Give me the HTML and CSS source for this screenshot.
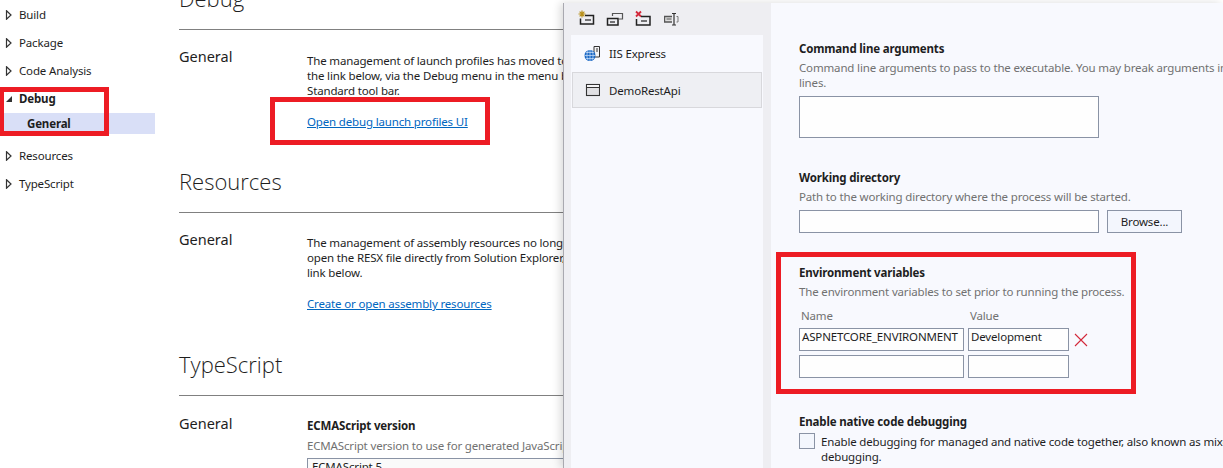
FILE: index.html
```html
<!DOCTYPE html>
<html lang="en">
<head>
    <meta charset="UTF-8">
    <title>Project properties</title>
    <link rel="stylesheet" href="styles.css">
</head>
<body>

<div class="app">
    <!-- project property tree -->
    <nav class="tree">
        <div class="tree-row"><svg class="arrow" width="7" height="10" viewBox="0 0 7 10"><path d="M1.500 .8 6 5 1.500 9.200z" fill="#fff" stroke="#333" stroke-width="1.200"/></svg>Build</div>
        <div class="tree-row"><svg class="arrow" width="7" height="10" viewBox="0 0 7 10"><path d="M1.500 .8 6 5 1.500 9.200z" fill="#fff" stroke="#333" stroke-width="1.200"/></svg>Package</div>
        <div class="tree-row"><svg class="arrow" width="7" height="10" viewBox="0 0 7 10"><path d="M1.500 .8 6 5 1.500 9.200z" fill="#fff" stroke="#333" stroke-width="1.200"/></svg>Code Analysis</div>
        <div class="tree-row tree-open"><svg class="arrow" width="7" height="10" viewBox="0 0 7 10"><path d="M7 2v6H1z" fill="#333"/></svg>Debug</div>
        <div class="tree-child">General</div>
        <div class="tree-row"><svg class="arrow" width="7" height="10" viewBox="0 0 7 10"><path d="M1.500 .8 6 5 1.500 9.200z" fill="#fff" stroke="#333" stroke-width="1.200"/></svg>Resources</div>
        <div class="tree-row"><svg class="arrow" width="7" height="10" viewBox="0 0 7 10"><path d="M1.500 .8 6 5 1.500 9.200z" fill="#fff" stroke="#333" stroke-width="1.200"/></svg>TypeScript</div>
    </nav>

    <main class="doc">
        <section class="doc-section doc-section-first">
            <h2>Debug</h2>
            <div class="doc-row">
                <h3>General</h3>
                <div class="doc-body">
                    <p>The management of launch profiles has moved to a dedicated dialog. It may be accessed via<br>the link below, via the Debug menu in the menu bar, or via the Debug Target command on the<br>Standard tool bar.</p>
                    <a class="doc-link" href="#">Open debug launch profiles UI</a>
                </div>
            </div>
        </section>
        <section class="doc-section">
            <h2>Resources</h2>
            <div class="doc-row">
                <h3>General</h3>
                <div class="doc-body">
                    <p>The management of assembly resources no longer occurs through project properties. Instead,<br>open the RESX file directly from Solution Explorer, or create or open the default file via the<br>link below.</p>
                    <a class="doc-link" href="#">Create or open assembly resources</a>
                </div>
            </div>
        </section>
        <section class="doc-section doc-section-last">
            <h2>TypeScript</h2>
            <div class="doc-row">
                <h3>General</h3>
                <div class="doc-body">
                    <h4>ECMAScript version</h4>
                    <p class="hint">ECMAScript version to use for generated JavaScript files.</p>
                    <div class="doc-select">ECMAScript 5</div>
                </div>
            </div>
        </section>
    </main>

    <!-- launch profiles dialog -->
    <div class="dialog">
        <aside class="profiles">
            <div class="toolbar">
                <svg width="20" height="18" viewBox="0 0 20 18">
                    <path d="M5 1.500v7M1.500 5h7M2.600 2.600l4.800 4.800M7.400 2.600 2.600 7.400" stroke="#b8901c" stroke-width="1.200"/>
                    <path d="M8 6.500h8.500v8.500H3.500V9.500" fill="none" stroke="#222" stroke-width="1.500"/>
                    <path d="M8 11h6" stroke="#222" stroke-width="1.200"/>
                </svg>
                <svg width="20" height="18" viewBox="0 0 20 18">
                    <path d="M6.500 7V4.500h10v5.500H13" fill="none" stroke="#555" stroke-width="1.200"/>
                    <rect x="1.500" y="9.500" width="10.500" height="6.500" fill="none" stroke="#222" stroke-width="1.500"/>
                    <path d="M4 13h5" stroke="#222" stroke-width="1.200"/>
                </svg>
                <svg width="20" height="18" viewBox="0 0 20 18">
                    <path d="M1 2.500l5 5M6 2.500l-5 5" stroke="#d3283a" stroke-width="1.800"/>
                    <path d="M6 7.500h9v8.500H1.500v-6" fill="none" stroke="#222" stroke-width="1.500"/>
                    <path d="M6 12h6" stroke="#222" stroke-width="1.200"/>
                </svg>
                <svg width="20" height="18" viewBox="0 0 20 18">
                    <path d="M8 7.500H.5v5.500H8" fill="#ddd" stroke="#555" stroke-width="1.400"/>
                    <path d="M2.500 10h5" stroke="#555"/>
                    <path d="M8 4.500h4M10 4.500v11.500M8 16h4" fill="none" stroke="#333" stroke-width="1.200"/>
                    <path d="M12.500 7.500H14v5.500h-1.500" fill="none" stroke="#777"/>
                </svg>
            </div>
            <div class="profile-list">
                <div class="profile">
                    <svg width="16" height="16" viewBox="0 0 16 16">
                        <path d="M10 1.500h5.500v10.500H10z" fill="#f4f4f6" stroke="#333"/>
                        <path d="M12 4h2M12 6h2" stroke="#333"/>
                        <circle cx="6" cy="10.500" r="5.500" fill="#1b68c4"/>
                        <path d="M.5 10.500h11M6 5v11M2 7.500h8M2 13.500h8M4 6c-1.500 2.500-1.500 6.500 0 9M8 6c1.500 2.500 1.500 6.500 0 9" fill="none" stroke="#cfe3fa" stroke-width=".7"/>
                    </svg>
                    IIS Express
                </div>
                <div class="profile profile-active">
                    <svg width="16" height="16" viewBox="0 0 16 16">
                        <rect x="2.500" y="2.500" width="13" height="11" fill="#e0e0e3" stroke="#333" stroke-width="1.100"/>
                        <path d="M2.500 5.500h13" stroke="#333"/>
                        <path d="M3 3h12v2H3z" fill="#f4f4f6"/>
                    </svg>
                    DemoRestApi
                </div>
            </div>
        </aside>

        <div class="settings">
            <div class="field field-args">
                <h4>Command line arguments</h4>
                <p class="hint">Command line arguments to pass to the executable. You may break arguments into multiple<br>lines.</p>
                <div class="textbox textbox-tall"></div>
            </div>
            <div class="field field-dir">
                <h4>Working directory</h4>
                <p class="hint">Path to the working directory where the process will be started.</p>
                <div class="dir-row">
                    <div class="textbox"></div>
                    <button class="browse" type="button">Browse...</button>
                </div>
            </div>
            <div class="field field-env">
                <h4>Environment variables</h4>
                <p class="hint">The environment variables to set prior to running the process.</p>
                <div class="env-grid">
                    <span class="env-head">Name</span>
                    <span class="env-head">Value</span>
                    <span></span>
                    <div class="env-cell">ASPNETCORE_ENVIRONMENT</div>
                    <div class="env-cell">Development</div>
                    <svg class="env-remove" width="14" height="14" viewBox="0 0 14 14"><path d="M1 1l12 12M13 1 1 13" stroke="#d3283a" stroke-width="1.100"/></svg>
                    <div class="env-cell"></div>
                    <div class="env-cell"></div>
                    <span></span>
                </div>
            </div>
            <div class="field field-native">
                <h4>Enable native code debugging</h4>
                <div class="check-row">
                    <span class="check"></span>
                    <p>Enable debugging for managed and native code together, also known as mixed-mode<br>debugging.</p>
                </div>
            </div>
        </div>
    </div>
</div>

<!-- annotation boxes drawn over the screenshot -->
<div class="mark mark-tree"></div>
<div class="mark mark-link"></div>
<div class="mark mark-env"></div>

</body>
</html>
```

FILE: styles.css
```css
html, body {
    margin: 0;
    padding: 0;
    height: 468px;
    overflow: hidden;
}

body {
    font-family: "Noto Sans", "Open Sans", sans-serif;
    font-size: 11.5px;
    letter-spacing: -0.16px;
    line-height: 15px;
    color: #1e1e1e;
    background-color: #fff;
}

h2, h3, h4, p {
    margin: 0;
    font-weight: normal;
    font-size: inherit;
}

.app {
    display: flex;
    height: 468px;
}

/* tree */

.tree {
    width: 155px;
    flex: none;
}

.tree-row {
    display: flex;
    align-items: center;
    gap: 7px;
    height: 28px;
    padding-left: 5px;
}

.arrow {
    flex: none;
    margin-top: 2px;
}

.tree-open {
    height: 28px;
    padding-bottom: 1px;
    font-weight: bold;
}

.tree-child {
    height: 21px;
    line-height: 21px;
    padding-left: 27px;
    margin-bottom: 7px;
    font-weight: bold;
    background-color: #d9dff7;
}

/* middle document */

.doc {
    width: 408px;
    flex: none;
    overflow: hidden;
    white-space: nowrap;
    margin-top: -11px;
    padding-left: 24px;
    box-sizing: border-box;
}

.doc-section {
    height: 183px;
}

.doc-section h2 {
    height: 20px;
    padding-bottom: 20px;
    border-bottom: 1px solid #808080;
    font-family: "Open Sans", sans-serif;
    font-weight: 300;
    font-size: 22px;
    letter-spacing: 0;
    line-height: 18px;
}

.doc-row {
    display: flex;
    padding-top: 22px;
}

.doc-section-first .doc-row {
    padding-top: 23px;
}

.doc-row h3 {
    width: 128px;
    flex: none;
    margin-top: -3px;
    font-size: 14.5px;
    letter-spacing: 0;
}

.doc-section-first .doc-row h3 {
    margin-top: -4px;
}

.doc-section-last .doc-row h3 {
    margin-top: -2px;
}

.doc-link {
    display: block;
    margin-top: 16px;
    color: #0066bf;
    text-decoration: underline;
}

.doc-select {
    height: 22px;
    margin-top: 5px;
    padding-left: 4px;
    width: 300px;
    border: 1px solid #8a93a5;
    background-color: #fafafa;
}

h4 {
    font-weight: bold;
}

.hint {
    margin-top: 5px;
    color: #717171;
}

/* dialog */

.dialog {
    position: relative;
    display: flex;
    width: 660px;
    flex: none;
    margin-top: 3px;
    border-left: 1px solid #a9a9b0;
    box-sizing: border-box;
    box-shadow: -3px 0 8px rgba(0, 0, 0, 0.14);
    background-color: #f8f9fe;
    white-space: nowrap;
    overflow: hidden;
}

.profiles {
    width: 207px;
    flex: none;
    padding: 0 8px 0 7px;
    box-sizing: border-box;
    background-color: #eeeef2;
}

.toolbar {
    display: flex;
    gap: 9px;
    height: 32px;
    padding: 6px 0 0 6px;
    box-sizing: border-box;
}

.profile-list {
    height: 440px;
    background-color: #f8f9fe;
}

.profile {
    display: flex;
    align-items: center;
    gap: 9px;
    height: 36px;
    padding-left: 12px;
    box-sizing: border-box;
    border: 1px solid transparent;
}

.profile-active {
    margin: 1px 1px 0;
    padding-left: 11px;
    background-color: #eeeff3;
    border-color: #d8d8dc;
}

.settings {
    flex: 1;
    padding: 38px 0 0 28px;
}

.field .hint {
    margin-top: 4px;
}

.textbox {
    width: 300px;
    height: 23px;
    box-sizing: border-box;
    border: 1px solid #8a93a5;
    background-color: #fefefe;
}

.textbox-tall {
    height: 42px;
    margin-top: 6px;
}

.field-dir,
.field-env {
    margin-top: 32px;
}

.field-native {
    margin-top: 36px;
}

.dir-row {
    display: flex;
    gap: 8px;
    margin-top: 6px;
}

.browse {
    width: 75px;
    height: 23px;
    padding: 0;
    font: inherit;
    letter-spacing: inherit;
    color: #1e1e1e;
    border: 1px solid #8a93a5;
    background-color: #f3f6fd;
}

.env-grid {
    display: grid;
    grid-template-columns: 165px 101px 14px;
    column-gap: 4px;
    row-gap: 4px;
    align-items: center;
    margin-top: 9px;
}

.env-head {
    margin-bottom: 1px;
    padding-left: 2px;
    color: #717171;
}

.env-cell {
    height: 23px;
    padding: 0 2px;
    box-sizing: border-box;
    border: 1px solid #8a93a5;
    background-color: #fefefe;
    line-height: 16px;
    overflow: hidden;
}

.env-remove {
    margin-left: 1px;
}

.check-row {
    display: flex;
    gap: 6px;
    margin-top: 4px;
}

.check {
    width: 16px;
    height: 16px;
    flex: none;
    box-sizing: border-box;
    border: 1px solid #8a93a5;
    background-color: #f3f6fd;
}

.check-row p {
    margin-top: 1px;
}

/* red annotation boxes */

.mark {
    position: absolute;
    box-sizing: border-box;
    border: 5px solid #ed1c24;
}

.mark-tree {
    left: -1px;
    top: 87px;
    width: 110px;
    height: 49px;
}

.mark-link {
    left: 270px;
    top: 97px;
    width: 220px;
    height: 48px;
}

.mark-env {
    left: 776px;
    top: 252px;
    width: 360px;
    height: 142px;
}
```
